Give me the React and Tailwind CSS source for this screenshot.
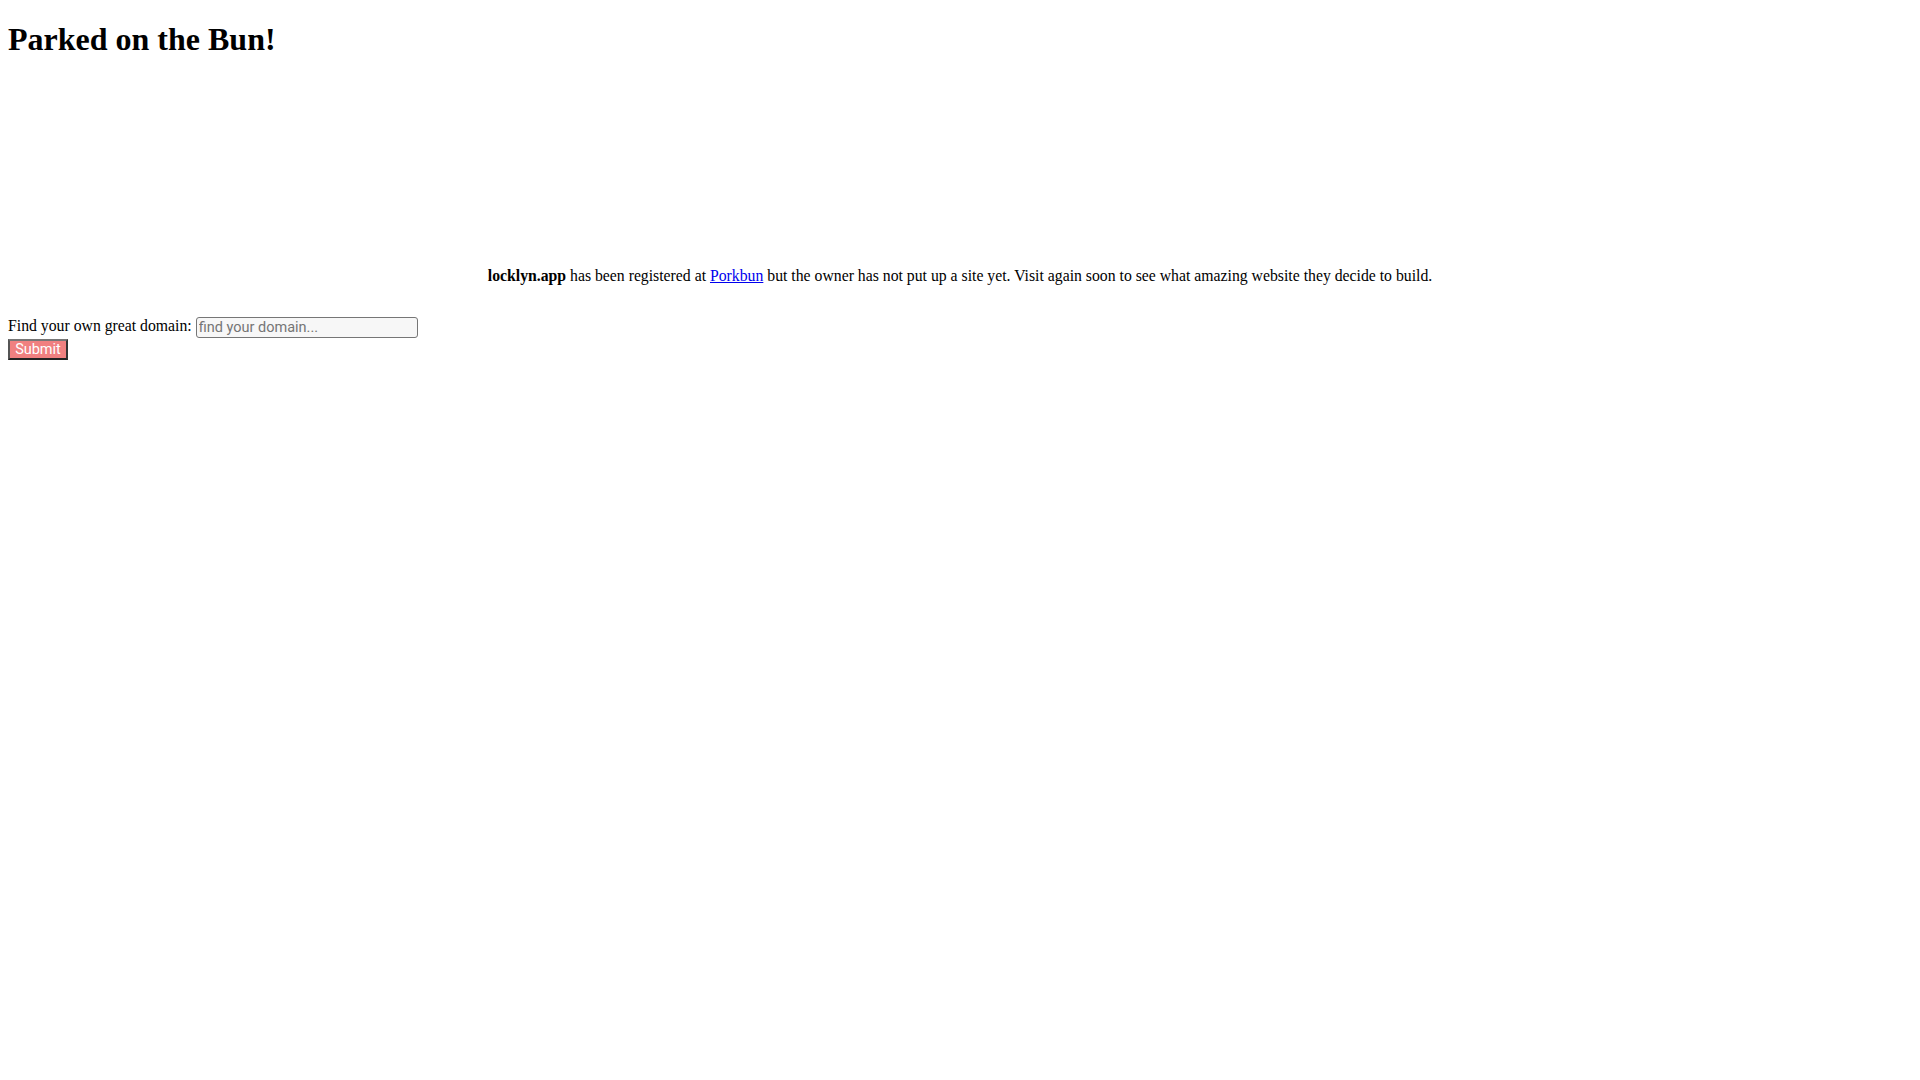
import React from 'react';

export default function App() {
  return (
    <div className="min-h-screen bg-white p-2 font-['Liberation_Serif',serif] text-[15.75px] text-black">
      <h1 className="mt-[13.44px] mb-[21.44px] text-[32px] font-bold leading-[1.15]">Parked on the Bun!</h1>

      {/* empty slot where the parking banner would sit */}
      <div className="h-[187.5px]" />

      <p className="text-center leading-[1.15]">
        <b>locklyn.app</b> has been registered at{' '}
        <a href="#" className="text-[#0000ee] underline">Porkbun</a> but the owner has not put up a site yet. Visit again soon to see what amazing website they decide to build.
      </p>

      <form className="mt-[32px] leading-[1.15]" onSubmit={(e) => e.preventDefault()}>
        <label>
          Find your own great domain:{' '}
          <input
            type="text"
            placeholder="find your domain..."
            className="h-[21px] w-[222px] rounded-[3px] border border-[#767676] bg-[#f7f7f7] px-[2px] align-middle font-['Roboto',sans-serif] text-[14.5px] placeholder:text-[#757575]"
          />
        </label>
        <br />
        <button
          type="submit"
          className="mt-[1px] h-[21px] w-[60px] border-2 border-t-[#767676] border-l-[#555] border-r-[#333] border-b-[#222] bg-[#f08080] font-['Roboto',sans-serif] text-[14.5px] leading-none text-white"
        >
          Submit
        </button>
      </form>
    </div>
  );
}
